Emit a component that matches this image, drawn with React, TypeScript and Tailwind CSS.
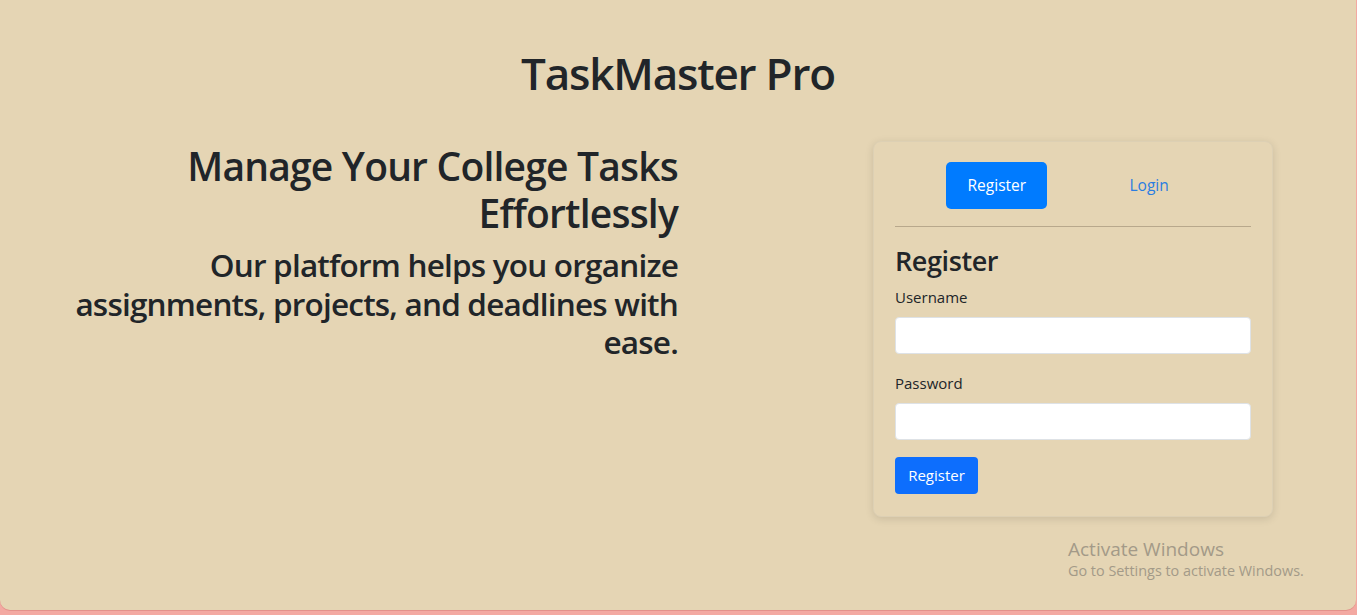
import React from "react";

export default function App() {
  const font = { fontFamily: '"Open Sans", "Noto Sans", sans-serif' };
  return (
    <div className="min-h-[615px] w-full bg-[#f3a9a2]" style={font}>
      <div className="relative h-[610px] w-[1356px] rounded-b-[10px] bg-[#e5d5b4] text-[#212529] shadow-[0_1px_0_#e3928b]">
        <h1 className="pt-[46px] text-center text-[44px] font-semibold leading-[54px] tracking-[-1.2px]">
          TaskMaster Pro
        </h1>
        <div className="mt-[41px] flex items-start">
          <div className="ml-[40px] w-[638px] pt-[1px] text-right">
            <h2 className="text-[39px] font-semibold leading-[47px] tracking-[-0.8px]">
              Manage Your College Tasks Effortlessly
            </h2>
            <h3 className="mt-[10px] text-[31.5px] font-semibold leading-[38.5px] tracking-[-0.8px]">
              Our platform helps you organize assignments, projects, and deadlines with ease.
            </h3>
          </div>
          <div className="ml-[195px] w-[400px] rounded-[8px] border border-[#ddd0b4] bg-[#e5d5b4] px-[21px] pb-[22px] pt-[20px] shadow-[0_2px_8px_rgba(0,0,0,0.12)]">
            <div className="flex justify-evenly border-b border-[#b8a88c] pb-[17px]">
              <button className="h-[47px] w-[101px] rounded-[5px] bg-[#007bff] text-[15.5px] text-white">
                Register
              </button>
              <button className="h-[47px] w-[101px] rounded-[5px] text-[15.5px] text-[#2a7de1]">
                Login
              </button>
            </div>
            <h4 className="mt-[17px] text-[27px] font-semibold leading-[34px] tracking-[-0.4px]">Register</h4>
            <label className="mt-[8px] block text-[15px] leading-[22px]">Username</label>
            <input className="mt-[9px] block h-[37px] w-full rounded-[4px] border border-[#dee2e6] bg-white px-3 outline-none" />
            <label className="mt-[18px] block text-[15px] leading-[22px]">Password</label>
            <input type="password" className="mt-[9px] block h-[37px] w-full rounded-[4px] border border-[#dee2e6] bg-white px-3 outline-none" />
            <button className="mt-[17px] h-[37px] w-[83px] rounded-[4px] bg-[#0d6efd] text-[15px] text-white">
              Register
            </button>
          </div>
        </div>
        <div className="absolute left-[1068px] top-[537px] text-[#a39a88]">
          <div className="text-[19px] leading-[24px]">Activate Windows</div>
          <div className="text-[14.4px] leading-[20px]">Go to Settings to activate Windows.</div>
        </div>
      </div>
    </div>
  );
}
